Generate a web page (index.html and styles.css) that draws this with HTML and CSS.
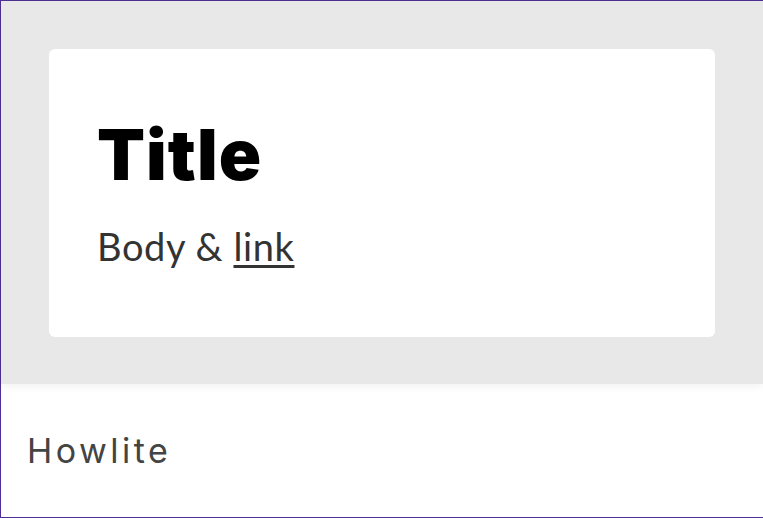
FILE: index.html
```html
<!DOCTYPE html>
<html>
<head>
<meta charset="utf-8">
<link rel="stylesheet" href="styles.css">
</head>
<body>
<main class="frame">
  <section class="stage">
    <div class="card">
      <h1 class="title">Title</h1>
      <p class="body">Body &amp; <a class="link" href="#">link</a></p>
    </div>
  </section>
  <footer class="footer">Howlite</footer>
</main>
</body>
</html>
```
FILE: styles.css
```css
html, body {
  margin: 0;
  padding: 0;
  background: #fff;
}
.frame {
  box-sizing: border-box;
  height: 518px;
  border-top: 1px solid #4e2f95;
  border-left: 1px solid #4e2f95;
  border-bottom: 1px solid #4e2f95;
  display: flex;
  flex-direction: column;
}
.stage {
  background: #e8e8e8;
  padding: 48px 48px 47px 48px;
  position: relative;
  z-index: 1;
  box-shadow: 0 3px 8px rgba(0, 0, 0, 0.05);
}
.card {
  background: #fff;
  border-radius: 6px;
  height: 288px;
  box-sizing: border-box;
  padding: 71px 48px 0 48px;
}
.title {
  margin: 0;
  font-family: Inter, sans-serif;
  font-weight: 900;
  font-size: 70px;
  line-height: 70px;
  letter-spacing: 1px;
  color: #000;
}
.body {
  margin: 34px 0 0 0;
  font-family: Lato, sans-serif;
  font-size: 38px;
  line-height: 44px;
  letter-spacing: 0.6px;
  color: #333;
}
.link {
  color: #333;
  text-decoration: underline;
  text-decoration-thickness: 3px;
  text-underline-offset: 4px;
}
.footer {
  flex: 1;
  display: flex;
  align-items: center;
  padding-left: 26px;
  font-family: Inter, sans-serif;
  font-size: 34px;
  letter-spacing: 3.5px;
  color: #444;
}
```
